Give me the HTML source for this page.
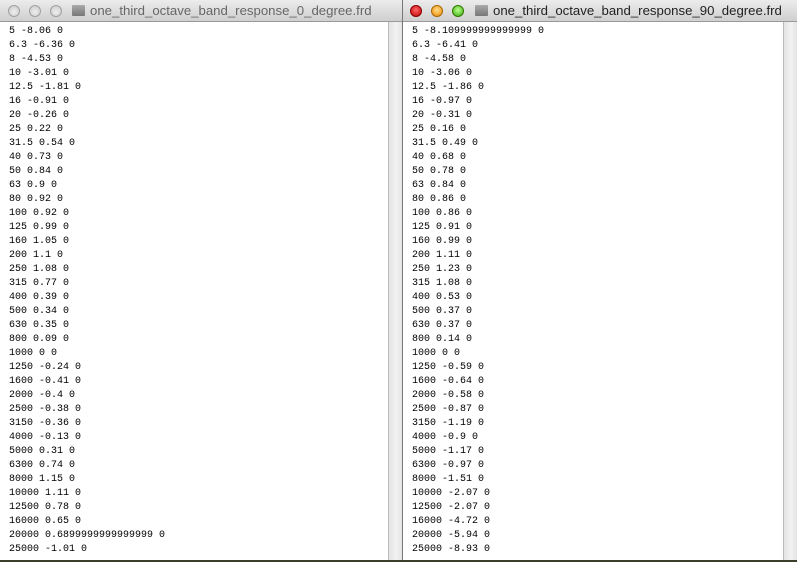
<!DOCTYPE html>
<html><head><style>
body{margin:0;width:797px;height:562px;background:#3a3f2c;position:relative;overflow:hidden;font-family:"Liberation Sans",sans-serif}
.win{position:absolute;top:0;height:560px;background:#d8d8d8;overflow:hidden}
.tb{height:22px;background:linear-gradient(#ececec,#cfcfcf);border-bottom:1px solid #999;box-sizing:border-box;position:relative}
.tb .t{position:absolute;top:3px;font-size:13.2px;color:#4a4a4a;white-space:nowrap}
.btn{position:absolute;top:5px;width:12px;height:12px;border-radius:50%;box-sizing:border-box}
.g{background:radial-gradient(circle at 50% 60%,#eee,#c8c8c8);border:1px solid #a0a0a0}
.content{position:absolute;top:22px;left:0;bottom:0;background:#fff}
pre{margin:0;padding:3px 0 0 9px;font-family:"Liberation Mono",monospace;font-size:10px;line-height:14px;color:#000}
.sb{position:absolute;top:22px;bottom:0;width:14px;background:linear-gradient(90deg,#e3e3e3,#f2f2f2,#e3e3e3);border-left:1px solid #bbb}
.doc{position:absolute;top:5px;width:13px;height:11px;background:linear-gradient(#aaa,#777);border-radius:1px}
</style></head><body>
<div class="win" style="left:0;width:402px">
<div class="tb">
<div class="btn g" style="left:8px"></div><div class="btn g" style="left:29px"></div><div class="btn g" style="left:50px"></div>
<div class="doc" style="left:72px"></div>
<div class="t" style="left:90px;color:#666">one_third_octave_band_response_0_degree.frd</div>
</div>
<div class="content" style="width:388px"><pre>5 -8.06 0
6.3 -6.36 0
8 -4.53 0
10 -3.01 0
12.5 -1.81 0
16 -0.91 0
20 -0.26 0
25 0.22 0
31.5 0.54 0
40 0.73 0
50 0.84 0
63 0.9 0
80 0.92 0
100 0.92 0
125 0.99 0
160 1.05 0
200 1.1 0
250 1.08 0
315 0.77 0
400 0.39 0
500 0.34 0
630 0.35 0
800 0.09 0
1000 0 0
1250 -0.24 0
1600 -0.41 0
2000 -0.4 0
2500 -0.38 0
3150 -0.36 0
4000 -0.13 0
5000 0.31 0
6300 0.74 0
8000 1.15 0
10000 1.11 0
12500 0.78 0
16000 0.65 0
20000 0.6899999999999999 0
25000 -1.01 0</pre></div>
<div class="sb" style="left:388px"></div>
</div>
<div class="win" style="left:402px;width:395px;border-left:1px solid #777;box-sizing:border-box">
<div class="tb">
<div class="btn" style="left:7px;background:radial-gradient(circle at 50% 40%,#f66,#b00);border:1px solid #800"></div>
<div class="btn" style="left:28px;background:radial-gradient(circle at 50% 40%,#fd8,#e80);border:1px solid #a60"></div>
<div class="btn" style="left:49px;background:radial-gradient(circle at 50% 40%,#bf8,#3a1);border:1px solid #370"></div>
<div class="doc" style="left:72px"></div>
<div class="t" style="left:90px;color:#222">one_third_octave_band_response_90_degree.frd</div>
</div>
<div class="content" style="width:380px"><pre>5 -8.109999999999999 0
6.3 -6.41 0
8 -4.58 0
10 -3.06 0
12.5 -1.86 0
16 -0.97 0
20 -0.31 0
25 0.16 0
31.5 0.49 0
40 0.68 0
50 0.78 0
63 0.84 0
80 0.86 0
100 0.86 0
125 0.91 0
160 0.99 0
200 1.11 0
250 1.23 0
315 1.08 0
400 0.53 0
500 0.37 0
630 0.37 0
800 0.14 0
1000 0 0
1250 -0.59 0
1600 -0.64 0
2000 -0.58 0
2500 -0.87 0
3150 -1.19 0
4000 -0.9 0
5000 -1.17 0
6300 -0.97 0
8000 -1.51 0
10000 -2.07 0
12500 -2.07 0
16000 -4.72 0
20000 -5.94 0
25000 -8.93 0</pre></div>
<div class="sb" style="left:380px"></div>
</div>
</body></html>
